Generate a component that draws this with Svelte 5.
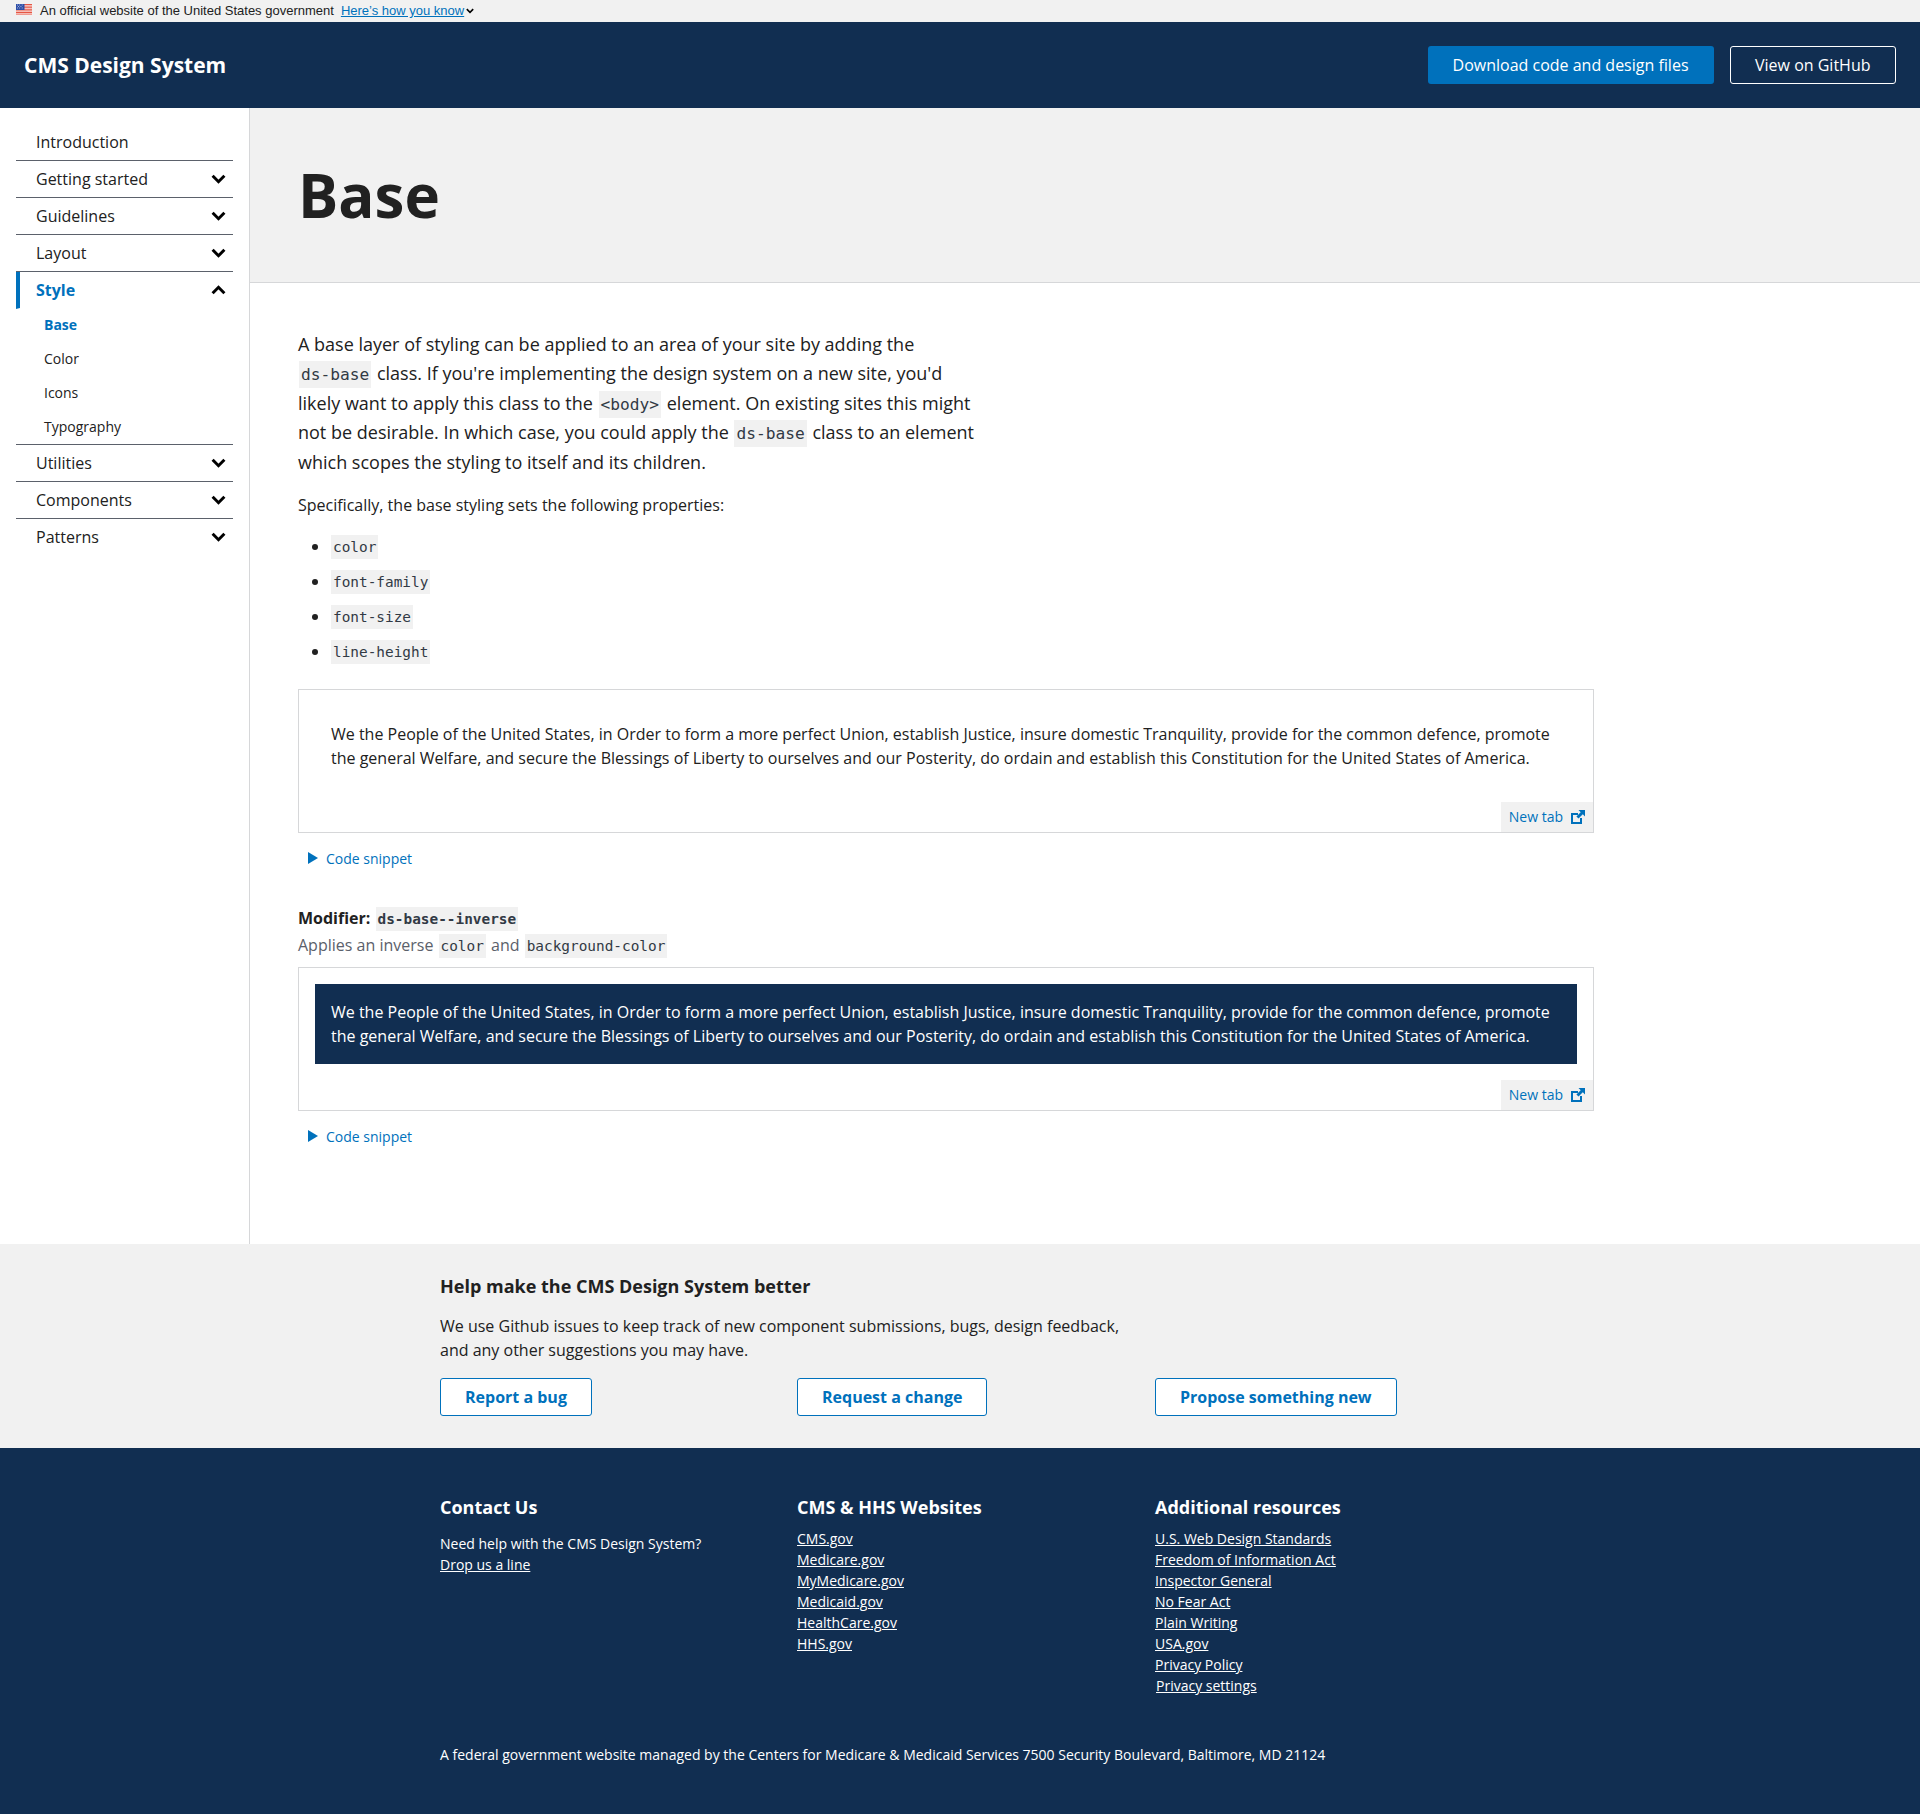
<script>
  const navTop = ['Getting started', 'Guidelines', 'Layout'];
  const navBottom = ['Utilities', 'Components', 'Patterns'];
  const styleLinks = ['Color', 'Icons', 'Typography'];
  const props = ['color', 'font-family', 'font-size', 'line-height'];
  const preamble = 'We the People of the United States, in Order to form a more perfect Union, establish Justice, insure domestic Tranquility, provide for the common defence, promote the general Welfare, and secure the Blessings of Liberty to ourselves and our Posterity, do ordain and establish this Constitution for the United States of America.';
  const sites = ['CMS.gov', 'Medicare.gov', 'MyMedicare.gov', 'Medicaid.gov', 'HealthCare.gov', 'HHS.gov'];
  const resources = ['U.S. Web Design Standards', 'Freedom of Information Act', 'Inspector General', 'No Fear Act', 'Plain Writing', 'USA.gov', 'Privacy Policy'];
</script>

{#snippet chevron(up)}
  <svg class="chevron" class:up viewBox="0 0 15 10" width="15" height="10">
    <path d="M1.6 1.8 L7.5 7.7 L13.4 1.8" fill="none" stroke="#000" stroke-width="3"/>
  </svg>
{/snippet}

{#snippet example(inverse)}
  <div class="example">
    <div class="preview">
      <div class="sample" class:inverse>{preamble}</div>
    </div>
    <a class="newtab" href="#top">New tab
      <svg viewBox="0 0 14 14" width="14" height="14">
        <path d="M0 3 H7 V5 H2 V12 H9 V8 H11 V14 H0 Z" fill="#0071bc"/>
        <path d="M7.5 0 H14 V6.5 L11.8 4.3 L7.5 8.6 L5.4 6.5 L9.7 2.2 Z" fill="#0071bc"/>
      </svg>
    </a>
  </div>
  <div class="snippet"><span class="arrow"></span><a href="#top">Code snippet</a></div>
{/snippet}

<div class="banner">
  <svg class="flag" viewBox="0 0 16 11" width="16" height="11">
    <rect width="16" height="11" fill="#fff"/>
    <path d="M0 .5h16M0 2.1h16M0 3.7h16M0 5.3h16M0 6.9h16M0 8.5h16M0 10.1h16" stroke="#e2432f" stroke-width=".9"/>
    <rect width="8.5" height="6" fill="#2e4fa8"/>
    <path d="M1 1h.7M3.4 1h.7M5.8 1h.7M2.2 2.5h.7M4.6 2.5h.7M1 4h.7M3.4 4h.7M5.8 4h.7" stroke="#fff" stroke-width=".8"/>
  </svg>
  <span>An official website of the United States government</span>
  <a href="#top">Here’s how you know</a>
  <svg class="small-chev" viewBox="0 0 10 7" width="8" height="6"><path d="M1 1.2 L5 5.2 L9 1.2" fill="none" stroke="#000" stroke-width="2"/></svg>
</div>

<header class="topbar">
  <a class="brand" href="#top">CMS Design System</a>
  <div class="actions">
    <a class="btn solid" href="#top">Download code and design files</a>
    <a class="btn ghost" href="#top">View on GitHub</a>
  </div>
</header>

<div class="body">
  <nav class="sidebar">
    <div class="nav-item"><span>Introduction</span></div>
    {#each navTop as item}
      <div class="nav-item"><span>{item}</span>{@render chevron(false)}</div>
    {/each}
    <div class="nav-item active"><span>Style</span>{@render chevron(true)}</div>
    <div class="subnav">
      <div class="sub current">Base</div>
      {#each styleLinks as link}
        <div class="sub">{link}</div>
      {/each}
    </div>
    {#each navBottom as item}
      <div class="nav-item"><span>{item}</span>{@render chevron(false)}</div>
    {/each}
  </nav>

  <main class="main">
    <div class="hero"><h1>Base</h1></div>
    <div class="content">
      <p class="lead">A base layer of styling can be applied to an area of your site by adding the <code>ds-base</code> class. If you're implementing the design system on a new site, you'd likely want to apply this class to the <code>&lt;body&gt;</code> element. On existing sites this might not be desirable. In which case, you could apply the <code>ds-base</code> class to an element which scopes the styling to itself and its children.</p>
      <p class="spec">Specifically, the base styling sets the following properties:</p>
      <ul>
        {#each props as prop}
          <li><code>{prop}</code></li>
        {/each}
      </ul>
      {@render example(false)}
      <h3 class="modifier"><strong>Modifier:</strong> <code>ds-base--inverse</code></h3>
      <p class="mod-desc">Applies an inverse <code>color</code> and <code>background-color</code></p>
      {@render example(true)}
    </div>
  </main>
</div>

<section class="help">
  <div class="wrap">
    <h2>Help make the CMS Design System better</h2>
    <p>We use Github issues to keep track of new component submissions, bugs, design feedback, and any other suggestions you may have.</p>
    <div class="grid">
      <div><a class="btn outline" href="#top">Report a bug</a></div>
      <div><a class="btn outline" href="#top">Request a change</a></div>
      <div><a class="btn outline" href="#top">Propose something new</a></div>
    </div>
  </div>
</section>

<footer class="footer">
  <div class="wrap">
    <div class="grid">
      <div>
        <h4>Contact Us</h4>
        <p class="contact">Need help with the CMS Design System?<br/><a href="#top">Drop us a line</a></p>
      </div>
      <div>
        <h4>CMS &amp; HHS Websites</h4>
        <ul class="links">
          {#each sites as site}<li><a href="#top">{site}</a></li>{/each}
        </ul>
      </div>
      <div>
        <h4>Additional resources</h4>
        <ul class="links">
          {#each resources as res}<li><a href="#top">{res}</a></li>{/each}
          <li class="nudge"><a href="#top">Privacy settings</a></li>
        </ul>
      </div>
    </div>
    <p class="legal">A federal government website managed by the Centers for Medicare &amp; Medicaid Services 7500 Security Boulevard, Baltimore, MD 21124</p>
  </div>
</footer>

<style>
  :global(body) {
    margin: 0;
    font-family: "Open Sans", sans-serif;
    color: #212121;
    background: #fff;
  }

  a {
    color: inherit;
  }

  code {
    font-family: "DejaVu Sans Mono", monospace;
    background: #f1f1f1;
    color: #323a45;
    padding: 4px 2px;
    font-size: 0.9em;
    line-height: 1;
    margin: 0 1px;
    white-space: nowrap;
  }

  .banner {
    box-sizing: border-box;
    height: 22px;
    background: #f1f1f1;
    display: flex;
    align-items: center;
    padding: 0 0 1px 16px;
    font-family: "Liberation Sans", Arial, sans-serif;
    font-size: 13px;
    color: #212121;
  }

  .banner .flag {
    margin-right: 8px;
    margin-top: -2px;
  }

  .banner a {
    color: #0071bc;
    margin-left: 7px;
  }

  .small-chev {
    margin-left: 2px;
  }

  .topbar {
    height: 86px;
    background: #112e51;
    display: flex;
    align-items: center;
    justify-content: space-between;
    padding: 0 24px;
  }

  .brand {
    color: #fff;
    font-size: 21px;
    font-weight: 700;
    text-decoration: none;
  }

  .actions {
    display: flex;
    gap: 16px;
  }

  .btn {
    display: inline-block;
    box-sizing: border-box;
    height: 38px;
    line-height: 36px;
    padding: 0 24px;
    font-size: 16px;
    border-radius: 3px;
    text-decoration: none;
    border: 1px solid transparent;
  }

  .solid {
    background: #0071bc;
    color: #fff;
  }

  .ghost {
    color: #fff;
    border-color: #fff;
    padding: 0 24.5px;
  }

  .outline {
    color: #0071bc;
    border-color: #0071bc;
    background: #fff;
    font-weight: 700;
  }

  .body {
    display: flex;
    height: 1136px;
  }

  .sidebar {
    box-sizing: border-box;
    width: 250px;
    flex: none;
    border-right: 1px solid #d6d7d9;
    padding: 16px 16px 0;
    font-size: 16px;
  }

  .nav-item {
    box-sizing: border-box;
    width: 217px;
    height: 37px;
    display: flex;
    align-items: center;
    justify-content: space-between;
    padding: 0 7px 0 20px;
    border-bottom: 1px solid #5b616b;
  }

  .nav-item:last-child {
    border-bottom-color: transparent;
  }

  .nav-item.active {
    color: #0071bc;
    font-weight: 700;
    border-left: 4px solid #0071bc;
    border-bottom-color: transparent;
    padding-left: 16px;
  }

  .chevron.up {
    transform: rotate(180deg);
  }

  .subnav {
    width: 217px;
    margin-top: -1px;
    border-bottom: 1px solid #5b616b;
  }

  .sub {
    height: 34px;
    line-height: 34px;
    padding-left: 28px;
    font-size: 14px;
  }

  .sub.current {
    color: #0071bc;
    font-weight: 700;
  }

  .main {
    flex: 1;
    min-width: 0;
  }

  .hero {
    box-sizing: border-box;
    height: 175px;
    background: #f1f1f1;
    border-bottom: 1px solid #d6d7d9;
    padding: 47px 48px 0;
  }

  h1 {
    margin: 0;
    font-size: 60px;
    line-height: 80px;
    font-weight: 700;
  }

  .content {
    padding: 47px 48px 0;
    width: 1296px;
  }

  .lead {
    margin: 0;
    width: 690px;
    font-size: 18px;
    line-height: 29.4px;
  }

  .spec {
    margin: 15px 0 0;
    font-size: 16px;
    line-height: 26px;
  }

  ul {
    margin: 11px 0 0;
    padding: 0 0 0 32px;
  }

  li {
    height: 35px;
    line-height: 35px;
    font-size: 16px;
  }

  .example {
    position: relative;
    box-sizing: border-box;
    height: 144px;
    margin-top: 20px;
    border: 1px solid #d6d7d9;
    padding: 16px;
  }

  .sample {
    font-size: 16px;
    line-height: 24px;
    padding: 15.5px 16px 16.5px;
  }

  .sample.inverse {
    background: #112e51;
    color: #fff;
  }

  .newtab {
    position: absolute;
    right: 0;
    bottom: 0;
    box-sizing: border-box;
    height: 30px;
    display: flex;
    align-items: center;
    gap: 8px;
    padding: 0 8px 1px;
    background: #f1f1f1;
    color: #0071bc;
    font-size: 14px;
    text-decoration: none;
  }

  .snippet {
    display: flex;
    align-items: center;
    height: 20px;
    margin-top: 15px;
    padding-left: 10px;
    font-size: 14px;
    color: #0071bc;
  }

  .snippet a {
    text-decoration: none;
  }

  .arrow {
    width: 0;
    height: 0;
    border-left: 10px solid #0071bc;
    border-top: 6px solid transparent;
    border-bottom: 6px solid transparent;
    margin-right: 8px;
  }

  .modifier {
    margin: 37px 0 0;
    font-size: 16px;
    line-height: 26px;
    font-weight: 400;
  }

  .modifier code {
    font-weight: 700;
  }

  .mod-desc {
    margin: 1px 0 0;
    font-size: 16px;
    line-height: 26px;
    color: #5b616b;
  }

  .mod-desc + .example {
    margin-top: 9px;
  }

  .wrap {
    width: 1072px;
    margin-left: 440px;
  }

  .grid {
    display: grid;
    grid-template-columns: 357px 358px 357px;
  }

  .help {
    box-sizing: border-box;
    height: 204px;
    background: #f1f1f1;
    padding-top: 30px;
  }

  .help h2 {
    margin: 0;
    font-size: 18px;
    line-height: 24px;
    font-weight: 700;
  }

  .help p {
    margin: 16px 0 0;
    width: 700px;
    font-size: 16px;
    line-height: 24px;
  }

  .help .grid {
    margin-top: 16px;
  }

  .footer {
    box-sizing: border-box;
    height: 366px;
    background: #112e51;
    color: #fff;
    padding-top: 47px;
  }

  h4 {
    margin: 0;
    font-size: 18px;
    line-height: 24px;
    font-weight: 700;
  }

  .contact {
    margin: 14px 0 0;
    font-size: 14px;
    line-height: 21px;
  }

  .links {
    list-style: none;
    margin: 9px 0 0;
    padding: 0;
  }

  .links li {
    height: 21px;
    line-height: 21px;
    font-size: 14px;
  }

  .nudge {
    padding-left: 1px;
  }

  .legal {
    margin: 48px 0 0;
    font-size: 14px;
    line-height: 21px;
    white-space: nowrap;
  }
</style>
